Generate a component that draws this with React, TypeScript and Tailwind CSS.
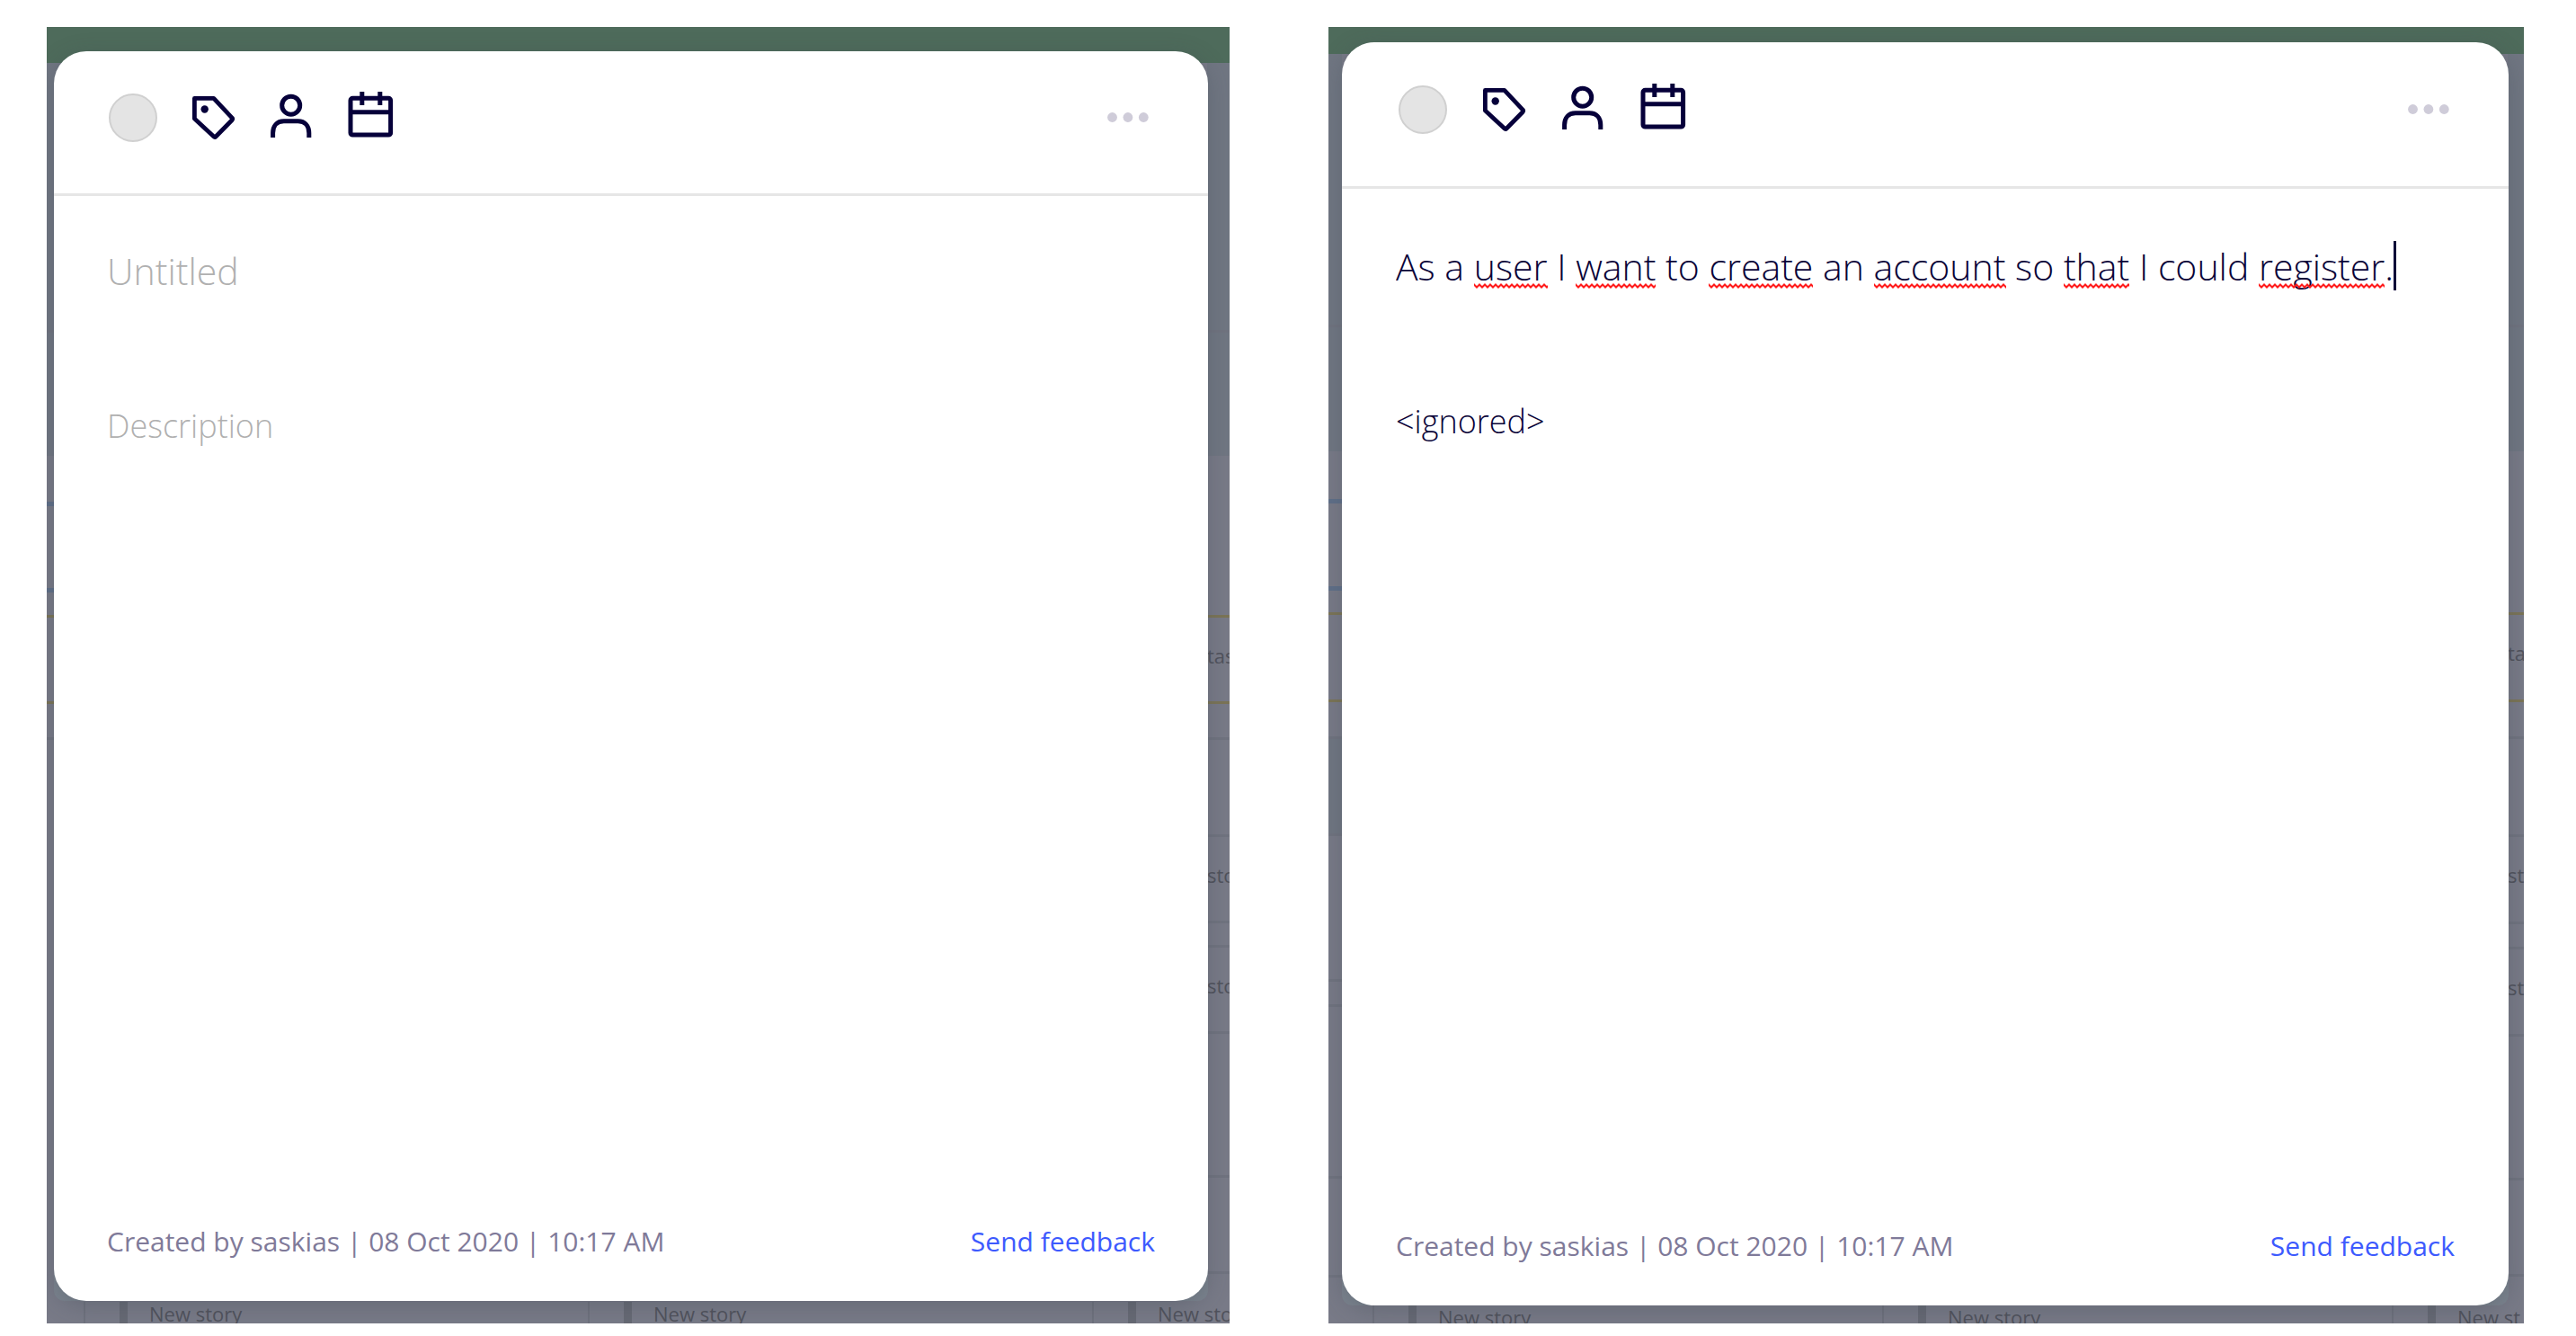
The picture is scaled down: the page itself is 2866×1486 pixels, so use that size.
import { useLayoutEffect, useRef, useState } from "react";

type RailSegment = { className: string; label?: string };

type StoryCardProps = {
  id: string;
  title: string;
  description: string;
  focused?: boolean;
  misspelled?: string[];
  panelClass: string;
  headClass: string;
  toolsClass: string;
  bodyClass: string;
  footClass: string;
  greenClass: string;
  leftRail: RailSegment[];
  rightRail: RailSegment[];
  rightRailClass: string;
  columnsClass: string;
  columnClass: string;
  columns: string[];
};

function TagIcon() {
  return (
    <svg viewBox="0 0 50 54" className="h-[54px] w-[50px] overflow-visible" fill="none" stroke="currentColor" strokeWidth="4.8" strokeLinejoin="round">
      <path d="M4.4 5.4H25.8L46.2 27.1Q47.2 28.3 46.2 29.5L28.3 47.7Q27 49 25.7 47.7L4.4 28.1Z" />
      <circle cx="15.7" cy="17.5" r="4.2" fill="currentColor" stroke="none" />
    </svg>
  );
}

function PersonIcon() {
  return (
    <svg viewBox="0 0 50 54" className="h-[54px] w-[50px] overflow-visible" fill="none" stroke="currentColor" strokeWidth="5">
      <circle cx="24.7" cy="13.2" r="10" />
      <path d="M4.6 49V44C4.6 36 9.2 30.8 16.8 30.8H32.6C40.2 30.8 44.8 36 44.8 44V49" />
    </svg>
  );
}

function CalendarIcon() {
  return (
    <svg viewBox="0 0 54 54" className="h-[54px] w-[54px] overflow-visible" fill="none" stroke="currentColor" strokeWidth="5">
      <rect x="4" y="5.3" width="44.6" height="40.8" rx="2.4" />
      <path d="M4 20.8H48.6" />
      <path d="M16.8 -2V13M36.8 -2V13" />
    </svg>
  );
}

function MoreIcon() {
  return (
    <svg viewBox="0 0 46 12" className="h-[12px] w-[46px]" fill="currentColor">
      <circle cx="5.5" cy="5.5" r="5.4" />
      <circle cx="22.9" cy="5.5" r="5.4" />
      <circle cx="40.3" cy="5.5" r="5.4" />
    </svg>
  );
}

function Squiggle({ id }: { id: string }) {
  return (
    <svg className="block h-[6px] w-full">
      <defs>
        <pattern id={id} width="6" height="6" patternUnits="userSpaceOnUse">
          <path d="M-1 0.5L0 1.5L3 4.5L6 1.5L7 0.5" fill="none" stroke="#ff1a1a" strokeWidth="2" />
        </pattern>
      </defs>
      <rect width="100%" height="6" fill={`url(#${id})`} />
    </svg>
  );
}

/* Title input with spelling marks and a caret laid over the typed text. */
function TitleField({ id, value, focused, misspelled = [] }: { id: string; value: string; focused?: boolean; misspelled?: string[] }) {
  const ref = useRef<HTMLInputElement>(null);
  const [text, setText] = useState(value);
  const [marks, setMarks] = useState<{ left: number; width: number }[]>([]);
  const [caret, setCaret] = useState(0);

  useLayoutEffect(() => {
    const ctx = document.createElement("canvas").getContext("2d");
    if (!ctx || !ref.current) return;
    const style = getComputedStyle(ref.current);
    ctx.font = `${style.fontWeight} ${style.fontSize} ${style.fontFamily}`;
    const found = misspelled
      .filter((word) => text.includes(word))
      .map((word) => ({
        left: Math.round(ctx.measureText(text.slice(0, text.indexOf(word))).width),
        width: Math.round(ctx.measureText(word).width),
      }));
    setMarks(found);
    setCaret(Math.round(ctx.measureText(text).width));
  }, [text]);

  return (
    <div className="relative">
      <input
        ref={ref}
        id={id}
        aria-label="Title"
        type="text"
        placeholder="Untitled"
        spellCheck={false}
        value={text}
        onChange={(e) => setText(e.target.value)}
        className="block h-[56px] w-full bg-transparent text-[41px] leading-[56px] font-[350] text-[#0a0338] caret-transparent outline-none placeholder:font-light placeholder:text-[#b0b0b0] placeholder:opacity-100"
      />
      {marks.map((mark, i) => (
        <span key={i} aria-hidden="true" className="pointer-events-none absolute top-[47px]" style={{ left: mark.left, width: mark.width }}>
          <Squiggle id={`${id}-mark-${i}`} />
        </span>
      ))}
      {focused && <span aria-hidden="true" className="pointer-events-none absolute top-0 h-[55px] w-[3px] bg-[#0a0338]" style={{ left: caret }} />}
    </div>
  );
}

function Rail({ segments, className }: { segments: RailSegment[]; className: string }) {
  return (
    <div className={`flex flex-col overflow-hidden ${className}`}>
      {segments.map((s, i) => (
        <div key={i} className={`flex shrink-0 items-center ${s.className}`}>
          {s.label}
        </div>
      ))}
    </div>
  );
}

/* The dimmed story board that shows around the edges of a card. */
function Board(p: StoryCardProps) {
  return (
    <div aria-hidden="true" className="absolute inset-0 flex flex-col bg-[#787a87] text-[22px] leading-[26px] text-[#50525c]">
      <div className={`shrink-0 bg-[#4e6b5b] ${p.greenClass}`} />
      <div className="flex min-h-0 flex-1 justify-between">
        <Rail segments={p.leftRail} className="w-[15px]" />
        <Rail segments={p.rightRail} className={p.rightRailClass} />
      </div>
      <div className={`flex shrink-0 overflow-hidden ${p.columnsClass}`}>
        {p.columns.map((label, n) => (
          <div key={n} className={`flex shrink-0 border-l-2 border-[#6e717d] pl-[38px] ${p.columnClass}`}>
            <div className="w-[9px] bg-[#666974]" />
            <span className="pl-[24px] whitespace-nowrap">{label}</span>
          </div>
        ))}
      </div>
    </div>
  );
}

function StoryCard(p: StoryCardProps) {
  return (
    <section className={`relative flex overflow-hidden ${p.panelClass}`}>
      <Board {...p} />
      <div className="relative flex min-h-[900px] flex-1 rounded-[12px] bg-linear-to-b from-transparent from-50% to-[#7b838e] to-90%">
        <article className="flex min-w-0 flex-1 flex-col rounded-[36px] bg-white shadow-[0_6px_26px_rgba(60,70,80,0.3)]">
          <header className={`flex items-center justify-between border-b-[3px] border-[#e6e6e6] pr-[66px] pb-[10px] text-[#06003a] ${p.headClass}`}>
            <div className={`flex items-center ${p.toolsClass}`}>
              <button type="button" aria-label="Colour" className="h-[54px] w-[54px] rounded-full border-2 border-[#d0d0d0] bg-[#e4e4e4]" />
              <button type="button" aria-label="Labels"><TagIcon /></button>
              <button type="button" aria-label="Assignee"><PersonIcon /></button>
              <button type="button" aria-label="Due date"><CalendarIcon /></button>
            </div>
            <button type="button" aria-label="More" className="text-[#cfccd9]"><MoreIcon /></button>
          </header>
          <div className={`flex flex-1 flex-col gap-[120px] ${p.bodyClass}`}>
            <TitleField id={`${p.id}-title`} value={p.title} focused={p.focused} misspelled={p.misspelled} />
            <textarea
              aria-label="Description"
              placeholder="Description"
              defaultValue={p.description}
              spellCheck={false}
              className="block w-full flex-1 resize-none bg-transparent text-[36px] leading-[50px] font-light text-[#0a0338] outline-none placeholder:text-[#b0b0b0] placeholder:opacity-100"
            />
          </div>
          <footer className={`flex items-center justify-between pb-[45px] text-[30px] leading-[42px] ${p.footClass}`}>
            <p className="text-[#7f7a99]">Created by saskias | 08 Oct 2020 | 10:17 AM</p>
            <a href="#feedback" className="text-[#3d5afe]">Send feedback</a>
          </footer>
        </article>
      </div>
    </section>
  );
}

const shade = "bg-[#707682]";
const line = "h-[3px] bg-[#70737f]";
const gold = "h-[3px] bg-[#7b7456]";
const blue = "h-[5px] bg-[#5f6f88]";

const firstLeft: RailSegment[] = [
  { className: `h-[297px] ${shade}` }, { className: line }, { className: `h-[137px] ${shade}` },
  { className: "h-[51px]" }, { className: blue }, { className: "h-[91px]" }, { className: blue },
  { className: "h-[25px]" }, { className: gold }, { className: "h-[93px]" }, { className: gold },
  { className: "h-[37px]" }, { className: line },
];

const firstRight: RailSegment[] = [
  { className: `h-[297px] ${shade}` }, { className: line }, { className: `h-[137px] ${shade}` },
  { className: "h-[177px]" }, { className: gold }, { className: "h-[93px] pb-[10px]", label: "tas" }, { className: gold },
  { className: "h-[37px]" }, { className: line }, { className: "h-[105px]" }, { className: line },
  { className: "h-[93px] pb-[10px]", label: "sto" }, { className: line }, { className: "h-[24px]" }, { className: line },
  { className: "h-[93px] pb-[10px]", label: "sto" }, { className: line }, { className: "h-[157px]" }, { className: line },
  { className: "h-[104px]" }, { className: line },
];

const secondLeft: RailSegment[] = [
  { className: `h-[301px] ${shade}` }, { className: line }, { className: `h-[138px] ${shade}` },
  { className: "h-[53px]" }, { className: blue }, { className: "h-[92px]" }, { className: blue },
  { className: "h-[24px]" }, { className: gold }, { className: "h-[94px]" }, { className: gold },
  { className: "h-[38px]" }, { className: line }, { className: `h-[105px] ${shade}` }, { className: line },
  { className: "h-[159px]" }, { className: line }, { className: "h-[25px]" }, { className: line },
  { className: "h-[188px]" }, { className: line }, { className: "h-[107px]" }, { className: line },
];

const secondRight: RailSegment[] = [
  { className: `h-[301px] ${shade}` }, { className: line }, { className: `h-[138px] ${shade}` },
  { className: "h-[179px]" }, { className: gold }, { className: "h-[94px] pb-[10px]", label: "ta" }, { className: gold },
  { className: "h-[38px]" }, { className: line }, { className: "h-[106px]" }, { className: line },
  { className: "h-[94px] pb-[10px]", label: "st" }, { className: line }, { className: "h-[25px]" }, { className: line },
  { className: "h-[94px] pb-[10px]", label: "st" }, { className: line }, { className: "h-[157px]" }, { className: line },
  { className: "h-[104px]" }, { className: line },
];

export default function App() {
  return (
    <main className="grid min-h-screen grid-cols-[1316fr_1330fr] gap-[110px] bg-white pt-[30px] pr-[58px] pb-[14px] pl-[52px] font-['Open_Sans','Noto_Sans',sans-serif]">
      <StoryCard
        id="first"
        title=""
        description=""
        panelClass="pt-[27px] pr-[24px] pb-[25px] pl-[8px]"
        headClass="h-[161px] pl-[61px]"
        toolsClass="gap-[37px]"
        bodyClass="px-[59px] pt-[55px]"
        footClass="px-[59px]"
        greenClass="h-[40px]"
        leftRail={firstLeft}
        rightRail={firstRight}
        rightRailClass="w-[25px]"
        columnsClass="h-[24px] pl-[41px]"
        columnClass="w-[561px]"
        columns={["New story", "New story", "New sto"]}
      />
      <StoryCard
        id="second"
        title="As a user I want to create an account so that I could register."
        description="<ignored>"
        focused
        misspelled={["user", "want", "create", "account", "that", "register"]}
        panelClass="pt-[17px] pr-[17px] pb-[20px] pl-[15px]"
        headClass="h-[163px] pl-[63px]"
        toolsClass="gap-[38px]"
        bodyClass="px-[60px] pt-[58px]"
        footClass="px-[60px]"
        greenClass="h-[30px]"
        leftRail={secondLeft}
        rightRail={secondRight}
        rightRailClass="w-[18px]"
        columnsClass="h-[20px] pl-[49px]"
        columnClass="w-[567px]"
        columns={["New story", "New story", "New st"]}
      />
    </main>
  );
}
